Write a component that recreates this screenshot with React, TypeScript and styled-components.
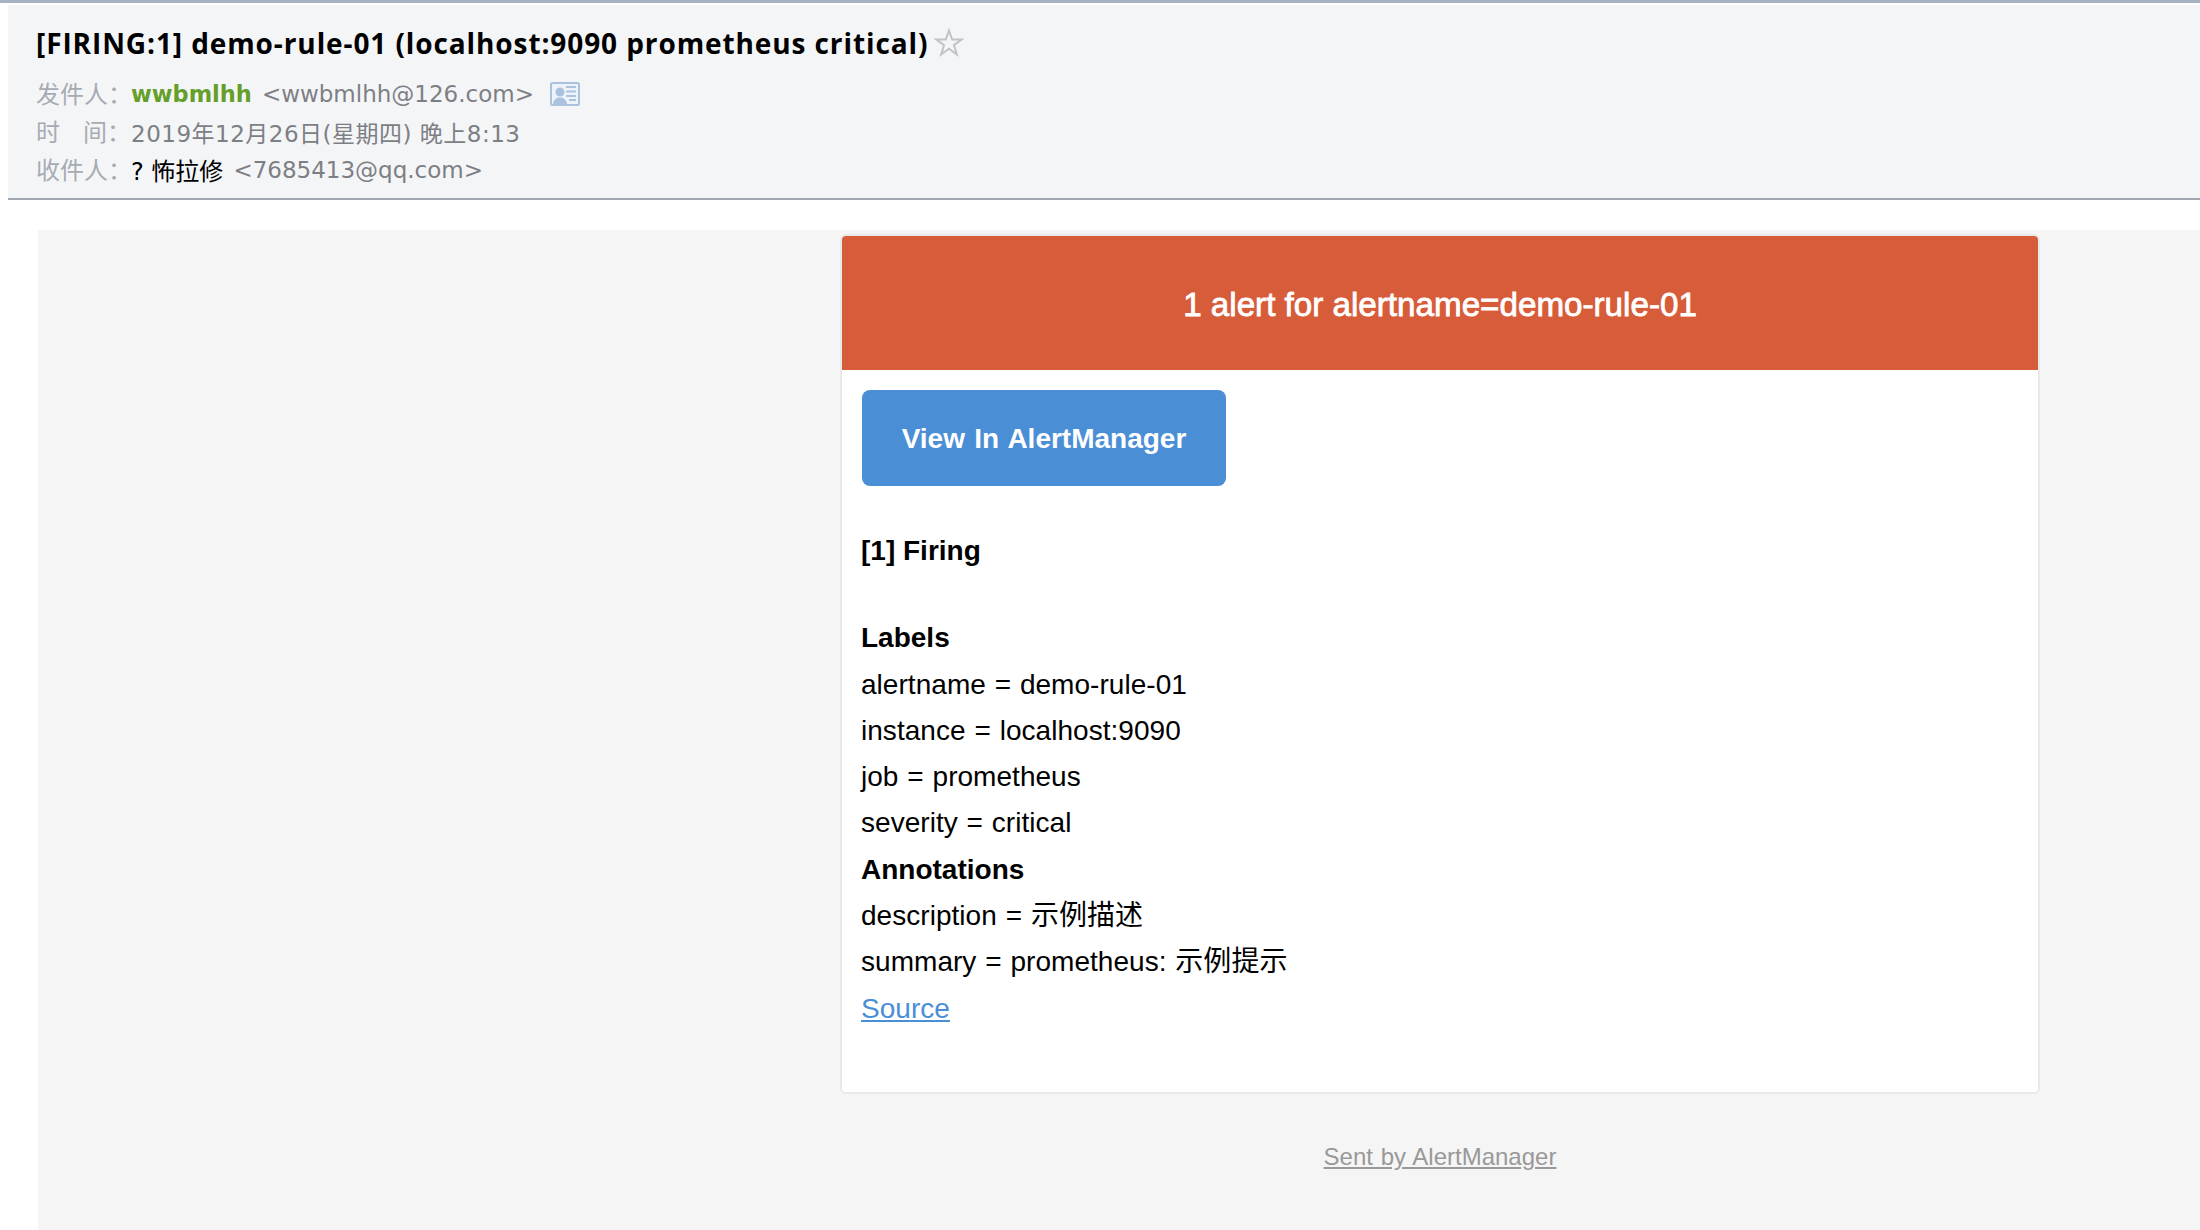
import { createGlobalStyle } from 'styled-components';
import styled from 'styled-components';

const LABELS = [
  'alertname = demo-rule-01',
  'instance = localhost:9090',
  'job = prometheus',
  'severity = critical',
];

const ANNOTATIONS = ['description = 示例描述', 'summary = prometheus: 示例提示'];

const ContactIcon = () => (
  <ContactSvg width="30" height="24" viewBox="0 0 30 24">
    <rect x="1" y="1" width="28" height="22" rx="1.500" fill="#eef3f9" stroke="#a9c3de" strokeWidth="2" />
    <circle cx="10" cy="10" r="4.500" fill="#a9c3de" />
    <path d="M3 22c.4-4 3-5.500 5-6.500h4c2 1 4.600 2.500 5 6.500z" fill="#a9c3de" />
    <path d="M16 5h10M16 9.500h10M16 14h10M19 18h7" stroke="#a9c3de" strokeWidth="1.800" />
  </ContactSvg>
);

const StarIcon = () => (
  <svg width="30" height="30" viewBox="0 0 30 30">
    <path
      d="M15 2.500l3.200 9.100h9.300l-7.500 5.600 2.800 9.300-7.800-5.700-7.800 5.700 2.800-9.300-7.500-5.600h9.300z"
      fill="none"
      stroke="#c0c3c8"
      strokeWidth="2"
    />
  </svg>
);

export default function App() {
  return (
    <>
      <GlobalStyle />
      <Page>
        <MailHeader>
          <Subject>
            [FIRING:1] demo-rule-01 (localhost:9090 prometheus critical)
            <StarIcon />
          </Subject>
          <MetaRow>
            <MetaLabel>发件人：</MetaLabel>
            <SenderName>wwbmlhh</SenderName>
            <Address>&lt;wwbmlhh@126.com&gt;</Address>
            <ContactIcon />
          </MetaRow>
          <MetaRow>
            <MetaLabel>时&nbsp;&nbsp;&nbsp;间：</MetaLabel>
            <SentTime>2019年12月26日(星期四) 晚上8:13</SentTime>
          </MetaRow>
          <MetaRow>
            <MetaLabel>收件人：</MetaLabel>
            <Recipient>? 怖拉修</Recipient>
            <Address>&lt;7685413@qq.com&gt;</Address>
          </MetaRow>
        </MailHeader>
        <MailBody>
          <Card>
            <CardTitle>1 alert for alertname=demo-rule-01</CardTitle>
            <CardContent>
              <ViewButton href="#">View In AlertManager</ViewButton>
              <Firing>[1] Firing</Firing>
              <Heading>Labels</Heading>
              {LABELS.map((item) => (
                <Line key={item}>{item}</Line>
              ))}
              <Heading>Annotations</Heading>
              {ANNOTATIONS.map((item) => (
                <Line key={item}>{item}</Line>
              ))}
              <Line>
                <SourceLink href="#">Source</SourceLink>
              </Line>
            </CardContent>
          </Card>
          <Footer>
            <FooterLink href="#">Sent by AlertManager</FooterLink>
          </Footer>
        </MailBody>
      </Page>
    </>
  );
}

const GlobalStyle = createGlobalStyle`
  html, body {
    margin: 0;
    padding: 0;
    background: #fff;
  }
`;

const Page = styled.div`
  width: 2200px;
  height: 1230px;
  overflow: hidden;
  border-top: 3px solid #a9b2c2;
  box-sizing: border-box;
  font-family: 'Liberation Sans', 'Noto Sans CJK SC', sans-serif;
`;

const MailHeader = styled.header`
  margin: 2px 0 0 8px;
  height: 195px;
  box-sizing: border-box;
  padding: 20px 0 0 28px;
  background: #f4f5f7;
  border-bottom: 2px solid #a0a6af;
`;

const Subject = styled.h1`
  display: flex;
  align-items: center;
  gap: 6px;
  margin: 0 0 14px;
  height: 36px;
  font-family: 'Open Sans', 'Noto Sans CJK SC', sans-serif;
  font-size: 28px;
  font-weight: 700;
  letter-spacing: 0.9px;
  color: #000;
`;

const MetaRow = styled.div`
  display: flex;
  align-items: center;
  gap: 10px;
  height: 38px;
  font-family: 'DejaVu Sans', 'Noto Sans CJK SC', sans-serif;
  font-size: 23px;
  color: #7d7f84;
`;

const MetaLabel = styled.span`
  width: 85px;
  padding-bottom: 3px;
  white-space: pre;
  color: #a6abb3;
  font-size: 24px;
`;

const SenderName = styled.span`
  font-size: 22.5px;
  font-weight: 700;
  color: #659f2a;
`;

const Address = styled.span`
  color: #7d7f84;
`;

const SentTime = styled(Address)`
  letter-spacing: 0.5px;
`;

const Recipient = styled.span`
  padding-bottom: 2px;
  font-size: 24px;
  color: #000;
`;

const ContactSvg = styled.svg`
  margin-left: 6px;
`;

const MailBody = styled.main`
  margin: 30px 0 0 38px;
  height: 1000px;
  padding: 4px 0 0 802px;
  background: #f5f5f5;
`;

const Card = styled.section`
  width: 1200px;
  height: 860px;
  box-sizing: border-box;
  border: 2px solid #e9e9e9;
  border-radius: 6px;
  background: #fff;
  overflow: hidden;
`;

const CardTitle = styled.div`
  display: flex;
  align-items: center;
  justify-content: center;
  height: 134px;
  padding-top: 3px;
  box-sizing: border-box;
  background: #d75c3a;
  color: #fff;
  font-size: 33.2px;
  -webkit-text-stroke: 0.8px #fff;
`;

const CardContent = styled.div`
  display: flex;
  flex-direction: column;
  align-items: flex-start;
  padding: 20px 19px 0;
`;

const ViewButton = styled.a`
  display: flex;
  align-items: center;
  justify-content: center;
  width: 364px;
  height: 96px;
  margin-left: 1px;
  padding-top: 1px;
  box-sizing: border-box;
  border-radius: 8px;
  background: #4a8ed6;
  color: #fff;
  font-size: 28px;
  font-weight: 700;
  word-spacing: 1.5px;
  text-decoration: none;
`;

const Firing = styled.div`
  margin: 42px 0 41px;
  font-size: 28px;
  line-height: 46.3px;
  font-weight: 700;
  color: #000;
`;

const Heading = styled.div`
  font-size: 28px;
  line-height: 46.3px;
  font-weight: 700;
  color: #000;
`;

const Line = styled.div`
  font-size: 28px;
  line-height: 46.3px;
  word-spacing: 1px;
  letter-spacing: 0.04px;
  color: #000;
`;

const SourceLink = styled.a`
  color: #4a8ed6;
`;

const Footer = styled.footer`
  width: 1200px;
  margin-top: 49px;
  text-align: center;
  font-size: 24px;
  word-spacing: 1px;
`;

const FooterLink = styled.a`
  color: #999;
`;
